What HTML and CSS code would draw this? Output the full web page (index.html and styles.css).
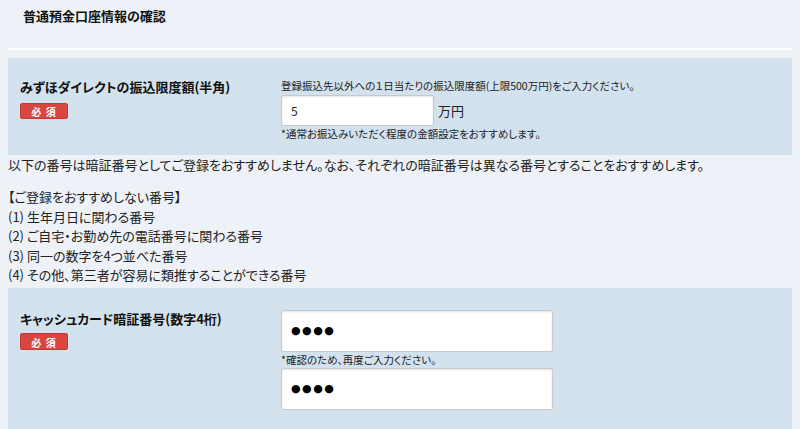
FILE: index.html
```html
<!DOCTYPE html>
<html lang="ja">
<head>
<meta charset="utf-8">
<link rel="stylesheet" href="styles.css">
</head>
<body>
<div class="page">
  <header class="head">
    <h1 class="title">普通預金口座情報の確認</h1>
  </header>

  <section class="box box-limit">
    <div class="label-col">
      <div class="label">みずほダイレクトの振込限度額(半角)</div>
      <span class="badge">必 須</span>
    </div>
    <div class="field-col">
      <div class="hint">登録振込先以外への１日当たりの振込限度額(上限500万円)をご入力ください。</div>
      <div class="amount-row">
        <input class="input input-amount" type="text" value="5">
        <span class="unit">万円</span>
      </div>
      <div class="note">*通常お振込みいただく程度の金額設定をおすすめします。</div>
    </div>
  </section>

  <div class="notice">
    <p class="lead">以下の番号は暗証番号としてご登録をおすすめしません。なお、それぞれの暗証番号は異なる番号とすることをおすすめします。</p>
    <ul class="list">
      <li>【ご登録をおすすめしない番号】</li>
      <li>(1) 生年月日に関わる番号</li>
      <li>(2) ご自宅・お勤め先の電話番号に関わる番号</li>
      <li>(3) 同一の数字を4つ並べた番号</li>
      <li>(4) その他、第三者が容易に類推することができる番号</li>
    </ul>
  </div>

  <section class="box box-pin">
    <div class="label-col">
      <div class="label">キャッシュカード暗証番号(数字4桁)</div>
      <span class="badge">必 須</span>
    </div>
    <div class="field-col">
      <input class="input input-pin" type="text" value="●●●●">
      <div class="note note-pin">*確認のため、再度ご入力ください。</div>
      <input class="input input-pin" type="text" value="●●●●">
    </div>
  </section>
</div>
</body>
</html>
```

FILE: styles.css
```css
html, body {
  margin: 0;
  padding: 0;
}
body {
  background-color: #eef2f7;
  background-image: repeating-conic-gradient(#f1f4f8 0 25%, #eaeff5 0 50%);
  background-size: 2px 2px;
  font-family: "Noto Sans CJK JP", "Noto Sans", sans-serif;
  font-feature-settings: "palt";
  color: #222;
  width: 800px;
  height: 429px;
  overflow: hidden;
}
.page {
  padding: 0 8px;
}
.head {
  height: 50px;
  border-bottom: 2px solid #ffffff;
  box-sizing: border-box;
}
.title {
  margin: 0;
  padding: 7px 0 0 15px;
  font-size: 13px;
  line-height: 18px;
  font-weight: bold;
  color: #111;
}
.box {
  background-color: #d3e2ef;
  background-image: repeating-conic-gradient(#d6e4f0 0 25%, #cfdfec 0 50%);
  background-size: 2px 2px;
  display: grid;
  grid-template-columns: 261px 1fr;
  padding: 0 12px;
}
.box-limit {
  margin-top: 8px;
  padding-top: 19px;
  padding-bottom: 14px;
}
.box-pin {
  margin-top: 3px;
  padding-top: 22px;
  padding-bottom: 20px;
}
.label {
  font-size: 13px;
  line-height: 20px;
  font-weight: bold;
  color: #111;
}
.box-pin .label {
  line-height: 18px;
}
.badge {
  display: inline-block;
  margin-top: 2px;
  width: 48px;
  height: 16px;
  line-height: 16px;
  text-align: center;
  background: #d9453f;
  border: 1px solid #c23a35;
  box-sizing: border-box;
  border-radius: 2px;
  color: #fff;
  font-size: 10px;
  font-weight: bold;
  letter-spacing: 1px;
}
.box-pin .badge {
  margin-top: 1px;
  height: 17px;
  line-height: 17px;
}
.hint {
  font-size: 10.5px;
  line-height: 14px;
  margin-top: 2px;
}
.amount-row {
  display: flex;
  align-items: center;
  gap: 4px;
  margin-top: 2px;
}
.input {
  box-sizing: border-box;
  background: #fff;
  border: 1px solid #c9c9c9;
  border-radius: 2px;
  box-shadow: inset 0 1px 2px rgba(0,0,0,0.12);
  outline: none;
  margin: 0;
  font-family: "Noto Sans CJK JP", sans-serif;
  color: #222;
}
.input-amount {
  width: 153px;
  height: 31px;
  padding: 0 9px;
  font-size: 12px;
}
.unit {
  font-size: 13px;
  color: #222;
}
.note {
  font-size: 10.5px;
  line-height: 14px;
  margin-top: 1px;
}
.input-pin {
  display: block;
  width: 272px;
  height: 42px;
  padding: 0 9px;
  font-family: "DejaVu Sans", sans-serif;
  font-size: 11px;
  letter-spacing: 1.5px;
  color: #000;
}
.note-pin {
  margin: 0;
  line-height: 16px;
}
.notice {
  font-size: 13px;
  color: #222;
}
.lead {
  margin: 0;
  line-height: 20px;
}
.list {
  list-style: none;
  margin: 12px 0 0;
  padding: 0;
  line-height: 19.5px;
}
```
